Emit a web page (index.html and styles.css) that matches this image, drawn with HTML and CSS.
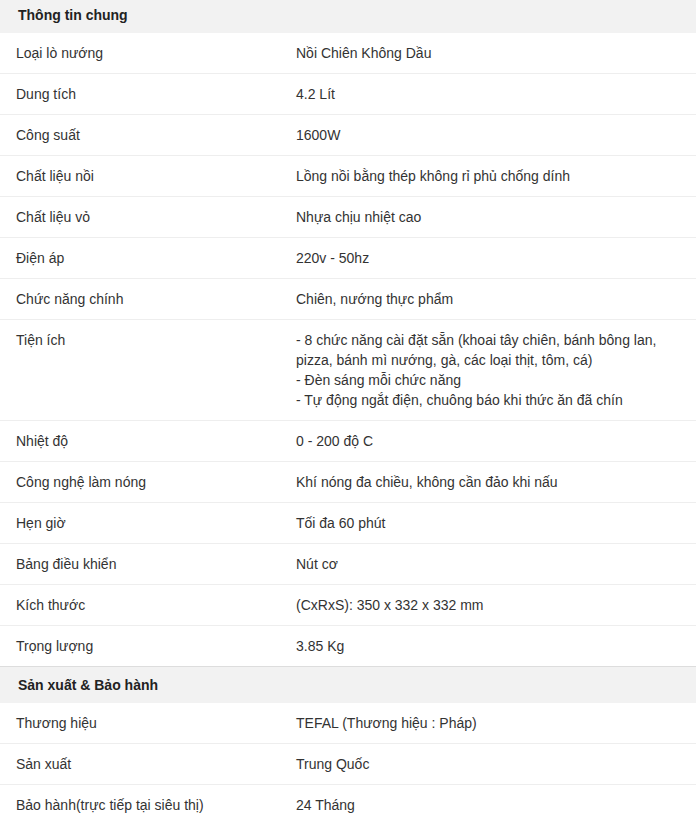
FILE: index.html
```html
<!DOCTYPE html>
<html lang="vi">

<head>
    <meta charset="UTF-8">
    <meta name="viewport" content="width=device-width, initial-scale=1.0">
    <title>Thông số kỹ thuật</title>
    <link rel="stylesheet" href="styles.css">
</head>

<body>
    <div class="specs">
        <!-- Thông tin chung -->
        <div class="spec-group">
            <h3 class="group-title">Thông tin chung</h3>
            <ul class="spec-list">
                <li class="spec-row"><span class="spec-name">Loại lò nướng</span><span class="spec-value">Nồi Chiên Không Dầu</span></li>
                <li class="spec-row"><span class="spec-name">Dung tích</span><span class="spec-value">4.2 Lít</span></li>
                <li class="spec-row"><span class="spec-name">Công suất</span><span class="spec-value">1600W</span></li>
                <li class="spec-row"><span class="spec-name">Chất liệu nồi</span><span class="spec-value">Lồng nồi bằng thép không rỉ phủ chống dính</span></li>
                <li class="spec-row"><span class="spec-name">Chất liệu vỏ</span><span class="spec-value">Nhựa chịu nhiệt cao</span></li>
                <li class="spec-row"><span class="spec-name">Điện áp</span><span class="spec-value">220v - 50hz</span></li>
                <li class="spec-row"><span class="spec-name">Chức năng chính</span><span class="spec-value">Chiên, nướng thực phẩm</span></li>
                <li class="spec-row"><span class="spec-name">Tiện ích</span><span class="spec-value">- 8 chức năng cài đặt sẵn (khoai tây chiên, bánh bông lan, pizza, bánh mì nướng, gà, các loại thịt, tôm, cá)<br>- Đèn sáng mỗi chức năng<br>- Tự động ngắt điện, chuông báo khi thức ăn đã chín</span></li>
                <li class="spec-row"><span class="spec-name">Nhiệt độ</span><span class="spec-value">0 - 200 độ C</span></li>
                <li class="spec-row"><span class="spec-name">Công nghệ làm nóng</span><span class="spec-value">Khí nóng đa chiều, không cần đảo khi nấu</span></li>
                <li class="spec-row"><span class="spec-name">Hẹn giờ</span><span class="spec-value">Tối đa 60 phút</span></li>
                <li class="spec-row"><span class="spec-name">Bảng điều khiển</span><span class="spec-value">Nút cơ</span></li>
                <li class="spec-row"><span class="spec-name">Kích thước</span><span class="spec-value">(CxRxS): 350 x 332 x 332 mm</span></li>
                <li class="spec-row"><span class="spec-name">Trọng lượng</span><span class="spec-value">3.85 Kg</span></li>
            </ul>
        </div>

        <!-- Sản xuất & Bảo hành -->
        <div class="spec-group">
            <h3 class="group-title">Sản xuất &amp; Bảo hành</h3>
            <ul class="spec-list">
                <li class="spec-row"><span class="spec-name">Thương hiệu</span><span class="spec-value">TEFAL (Thương hiệu : Pháp)</span></li>
                <li class="spec-row"><span class="spec-name">Sản xuất</span><span class="spec-value">Trung Quốc</span></li>
                <li class="spec-row"><span class="spec-name">Bảo hành(trực tiếp tại siêu thị)</span><span class="spec-value">24 Tháng</span></li>
            </ul>
        </div>
    </div>
</body>

</html>
```

FILE: styles.css
```css
body {
    margin: 0;
    font-family: 'Liberation Sans', Arial, sans-serif;
    font-size: 14px;
    line-height: 20px;
    color: #333;
    background-color: #fff;
}

/* the list is scrolled a little, the first title is cut at the top */
.specs {
    margin-top: -3px;
}

.spec-group + .spec-group {
    border-top: 1px solid #ddd;
}

.group-title {
    margin: 0;
    padding: 8px 18px;
    background-color: #f2f2f2;
    font-size: 14px;
    font-weight: bold;
    color: #222;
}

.spec-list {
    list-style-type: none;
    margin: 0;
    padding: 0;
}

.spec-row {
    display: grid;
    grid-template-columns: 296px 1fr;
    padding: 10px 0;
    border-bottom: 1px solid #eee;
}

.spec-row:last-child {
    border-bottom: none;
}

.spec-name {
    padding-left: 16px;
    padding-right: 10px;
}

.spec-value {
    padding-right: 16px;
}
```
